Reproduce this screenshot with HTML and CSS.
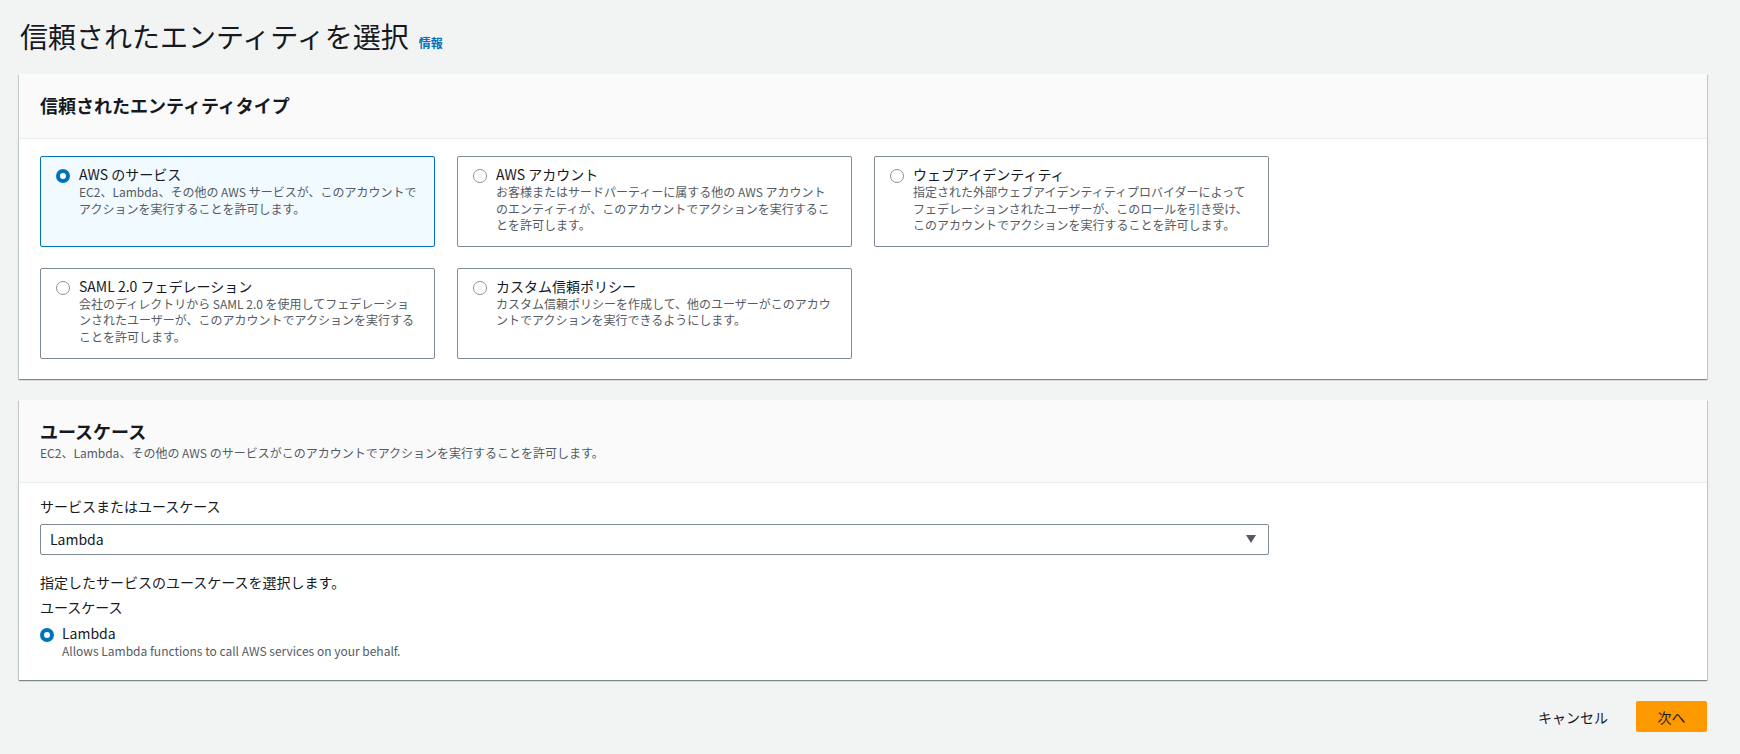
FILE: index.html
```html
<!DOCTYPE html>
<html lang="ja">
<head>
<meta charset="utf-8">
<title>信頼されたエンティティを選択</title>
<link rel="stylesheet" href="styles.css">
</head>
<body>
<div class="page">
  <header class="page-head">
    <h1 class="page-title">信頼されたエンティティを選択</h1>
    <a class="info-link" href="#">情報</a>
  </header>

  <section class="panel">
    <div class="panel-head">
      <h2 class="panel-title">信頼されたエンティティタイプ</h2>
    </div>
    <div class="panel-body body-tiles">
      <div class="tiles">
        <div class="tile selected">
          <span class="radio on"></span>
          <div class="tile-text">
            <div class="opt-title">AWS のサービス</div>
            <div class="opt-desc">EC2、Lambda、その他の AWS サービスが、このアカウントでアクションを実行することを許可します。</div>
          </div>
        </div>
        <div class="tile">
          <span class="radio"></span>
          <div class="tile-text">
            <div class="opt-title">AWS アカウント</div>
            <div class="opt-desc">お客様またはサードパーティーに属する他の AWS アカウントのエンティティが、このアカウントでアクションを実行することを許可します。</div>
          </div>
        </div>
        <div class="tile">
          <span class="radio"></span>
          <div class="tile-text">
            <div class="opt-title">ウェブアイデンティティ</div>
            <div class="opt-desc">指定された外部ウェブアイデンティティプロバイダーによってフェデレーションされたユーザーが、このロールを引き受け、このアカウントでアクションを実行することを許可します。</div>
          </div>
        </div>
        <div class="tile">
          <span class="radio"></span>
          <div class="tile-text">
            <div class="opt-title">SAML 2.0 フェデレーション</div>
            <div class="opt-desc">会社のディレクトリから SAML 2.0 を使用してフェデレーションされたユーザーが、このアカウントでアクションを実行することを許可します。</div>
          </div>
        </div>
        <div class="tile">
          <span class="radio"></span>
          <div class="tile-text">
            <div class="opt-title">カスタム信頼ポリシー</div>
            <div class="opt-desc">カスタム信頼ポリシーを作成して、他のユーザーがこのアカウントでアクションを実行できるようにします。</div>
          </div>
        </div>
      </div>
    </div>
  </section>

  <section class="panel">
    <div class="panel-head">
      <h2 class="panel-title">ユースケース</h2>
      <p class="panel-sub">EC2、Lambda、その他の AWS のサービスがこのアカウントでアクションを実行することを許可します。</p>
    </div>
    <div class="panel-body body-usecase">
      <div class="field-label">サービスまたはユースケース</div>
      <div class="field-grid">
        <div class="select">
          <span class="select-value">Lambda</span>
          <svg class="caret" width="10" height="8" viewBox="0 0 10 8"><path d="M0 0 H10 L5 8 Z" fill="#545b64"/></svg>
        </div>
      </div>
      <div class="hint">指定したサービスのユースケースを選択します。</div>
      <div class="field-label2">ユースケース</div>
      <div class="radio-row">
        <span class="radio on"></span>
        <div class="tile-text">
          <div class="opt-title">Lambda</div>
          <div class="opt-desc">Allows Lambda functions to call AWS services on your behalf.</div>
        </div>
      </div>
    </div>
  </section>

  <div class="actions">
    <button class="btn-link" type="button">キャンセル</button>
    <button class="btn-primary" type="button">次へ</button>
  </div>
</div>
</body>
</html>
```

FILE: styles.css
```css
html, body {
  margin: 0;
  padding: 0;
  background: #f2f3f3;
}

body {
  font-family: "Noto Sans CJK JP", "Noto Sans", sans-serif;
  color: #16191f;
  font-size: 14px;
}

.page {
  padding: 18px 33px 0 19px;
}

.page-head {
  display: flex;
  align-items: baseline;
  margin-bottom: 20px;
  padding-left: 1px;
}

.page-title {
  margin: 0;
  font-size: 28px;
  line-height: 36px;
  font-weight: 400;
  color: #16191f;
}

.info-link {
  margin-left: 10px;
  font-size: 12px;
  font-weight: 700;
  color: #0073bb;
  text-decoration: none;
}

.panel {
  background: #ffffff;
  box-shadow: 0 1px 1px 0 rgba(0, 28, 36, 0.3), 1px 1px 1px 0 rgba(0, 28, 36, 0.15), -1px 1px 1px 0 rgba(0, 28, 36, 0.15);
  margin-bottom: 21px;
}

.panel-head {
  background: #fafafa;
  border-bottom: 1px solid #eaeded;
  padding: 19px 21px 21px;
}

.panel-title {
  margin: 0;
  font-size: 18px;
  line-height: 24px;
  font-weight: 700;
}

.panel-sub {
  margin: 2px 0 0;
  font-size: 12px;
  line-height: 16px;
  color: #545b64;
}

.panel-body {
  padding: 0 21px;
}

.body-tiles {
  padding-top: 17px;
  padding-bottom: 20px;
}

.tiles {
  display: grid;
  grid-template-columns: repeat(3, calc((100% - 66px) / 4));
  gap: 21px 22px;
}

.tile {
  display: flex;
  align-items: flex-start;
  border: 1px solid #7f8a96;
  border-radius: 2px;
  padding: 7px 15px 12px;
  background: #ffffff;
}

.tile.selected {
  border-color: #0073bb;
  background: #f1faff;
}

.radio {
  flex: none;
  box-sizing: border-box;
  width: 14px;
  height: 14px;
  border-radius: 50%;
  border: 1.5px solid #879596;
  background: #ffffff;
  margin-top: 5px;
  margin-right: 9px;
}

.radio.on {
  border: 4px solid #0073bb;
}

.tile-text {
  min-width: 0;
}

.opt-title {
  font-size: 14px;
  line-height: 20px;
  color: #16191f;
}

.opt-desc {
  font-size: 12px;
  line-height: 16.6px;
  color: #545b64;
}

.body-usecase {
  padding-top: 13px;
  padding-bottom: 21px;
}

.field-label {
  font-size: 14px;
  line-height: 20px;
  margin-bottom: 8px;
}

.field-grid {
  display: grid;
  grid-template-columns: repeat(4, 1fr);
  gap: 22px;
}

.select {
  grid-column: span 3;
  box-sizing: border-box;
  height: 31px;
  border: 1px solid #7f8a96;
  border-radius: 2px;
  display: flex;
  align-items: center;
  justify-content: space-between;
  padding: 0 12px 0 9px;
  background: #ffffff;
}

.select-value {
  font-size: 14px;
  line-height: 20px;
}

.caret {
  display: block;
}

.hint {
  margin-top: 17px;
  font-size: 14px;
  line-height: 20px;
}

.field-label2 {
  margin-top: 5px;
  font-size: 14px;
  line-height: 20px;
}

.radio-row {
  display: flex;
  align-items: flex-start;
  margin-top: 6px;
}

.radio-row .radio {
  margin-right: 8px;
}

.actions {
  display: flex;
  justify-content: flex-end;
  align-items: center;
  gap: 28px;
}

.btn-link {
  border: none;
  background: none;
  padding: 0;
  font-family: inherit;
  font-size: 14px;
  line-height: 20px;
  color: #16191f;
}

.btn-primary {
  border: none;
  border-radius: 2px;
  background: #ff9900;
  color: #16191f;
  font-family: inherit;
  font-size: 14px;
  line-height: 20px;
  width: 71px;
  height: 31px;
  padding: 0;
}
```
